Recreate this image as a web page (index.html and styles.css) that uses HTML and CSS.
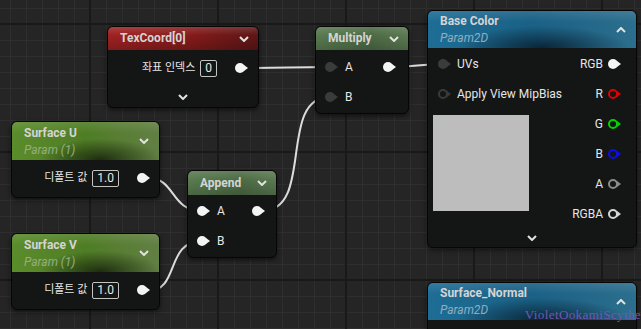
FILE: index.html
```html
<!DOCTYPE html>
<html lang="ko">
    <head>
        <meta charset="UTF-8">
        <title>Material Graph</title>
        <link rel="stylesheet" href="styles.css">
    </head>
    <body>

        <div class="graph">

            <!-- wires sit under the nodes -->
            <svg class="wires" width="641" height="329" viewBox="0 0 641 329">
                <path d="M247 68 C 285 68, 292 67, 330 67"/>
                <path d="M394 67 C 415 67, 420 64, 443 64"/>
                <path d="M148 178 C 176 178, 170 211, 202 211"/>
                <path d="M148 291 C 180 291, 165 241, 202 241"/>
                <path d="M262 211 C 315 211, 277 97, 330 97"/>
            </svg>

            <!-- TexCoord -->
            <div class="node texcoord">
                <div class="head red">
                    <span class="title">TexCoord[0]</span>
                    <svg class="chev" width="10" height="6" viewBox="0 0 10 6"><path d="M1 1 L5 5 L9 1"/></svg>
                </div>
                <div class="body pad-top3">
                    <div class="row out wide">
                        <span class="label ko">좌표 인덱스</span>
                        <span class="val">0</span>
                        <span class="pin"></span>
                    </div>
                    <div class="foot tall">
                        <svg class="chev" width="10" height="6" viewBox="0 0 10 6"><path d="M1 1 L5 5 L9 1"/></svg>
                    </div>
                </div>
            </div>

            <!-- Multiply -->
            <div class="node multiply">
                <div class="head sage">
                    <span class="title">Multiply</span>
                    <svg class="chev" width="10" height="6" viewBox="0 0 10 6"><path d="M1 1 L5 5 L9 1"/></svg>
                </div>
                <div class="body pad-top2">
                    <div class="row both">
                        <span class="pin dim"></span>
                        <span class="label">A</span>
                        <span class="pin push"></span>
                    </div>
                    <div class="row in">
                        <span class="pin dim"></span>
                        <span class="label">B</span>
                    </div>
                </div>
            </div>

            <!-- Append -->
            <div class="node append">
                <div class="head sage">
                    <span class="title">Append</span>
                    <svg class="chev" width="10" height="6" viewBox="0 0 10 6"><path d="M1 1 L5 5 L9 1"/></svg>
                </div>
                <div class="body pad-top1">
                    <div class="row both">
                        <span class="pin"></span>
                        <span class="label">A</span>
                        <span class="pin push"></span>
                    </div>
                    <div class="row in">
                        <span class="pin"></span>
                        <span class="label">B</span>
                    </div>
                </div>
            </div>

            <!-- Surface U -->
            <div class="node surf-u">
                <div class="head grass double">
                    <div class="titles">
                        <span class="title">Surface U</span>
                        <span class="sub">Param (1)</span>
                    </div>
                    <svg class="chev" width="10" height="6" viewBox="0 0 10 6"><path d="M1 1 L5 5 L9 1"/></svg>
                </div>
                <div class="body pad-top3">
                    <div class="row out wide">
                        <span class="label ko">디폴트 값</span>
                        <span class="val">1.0</span>
                        <span class="pin"></span>
                    </div>
                </div>
            </div>

            <!-- Surface V -->
            <div class="node surf-v">
                <div class="head grass double">
                    <div class="titles">
                        <span class="title">Surface V</span>
                        <span class="sub">Param (1)</span>
                    </div>
                    <svg class="chev" width="10" height="6" viewBox="0 0 10 6"><path d="M1 1 L5 5 L9 1"/></svg>
                </div>
                <div class="body pad-top3">
                    <div class="row out wide">
                        <span class="label ko">디폴트 값</span>
                        <span class="val">1.0</span>
                        <span class="pin"></span>
                    </div>
                </div>
            </div>

            <!-- Base Color -->
            <div class="node base-color">
                <div class="head sea double">
                    <div class="titles">
                        <span class="title">Base Color</span>
                        <span class="sub">Param2D</span>
                    </div>
                    <svg class="chev" width="10" height="6" viewBox="0 0 10 6"><path d="M1 5 L5 1 L9 5"/></svg>
                </div>
                <div class="body pad-top1 split">
                    <div class="col-left">
                        <div class="row in">
                            <span class="pin dim"></span>
                            <span class="label">UVs</span>
                        </div>
                        <div class="row in">
                            <span class="pin ring dark"></span>
                            <span class="label">Apply View MipBias</span>
                        </div>
                        <div class="preview"></div>
                    </div>
                    <div class="col-right">
                        <div class="row out"><span class="label">RGB</span><span class="pin"></span></div>
                        <div class="row out"><span class="label">R</span><span class="pin ring red-pin"></span></div>
                        <div class="row out"><span class="label">G</span><span class="pin ring green-pin"></span></div>
                        <div class="row out"><span class="label">B</span><span class="pin ring blue-pin"></span></div>
                        <div class="row out"><span class="label">A</span><span class="pin ring gray-pin"></span></div>
                        <div class="row out"><span class="label">RGBA</span><span class="pin ring light-pin"></span></div>
                    </div>
                </div>
                <div class="foot">
                    <svg class="chev" width="10" height="6" viewBox="0 0 10 6"><path d="M1 1 L5 5 L9 1"/></svg>
                </div>
            </div>

            <!-- Surface_Normal -->
            <div class="node surf-normal">
                <div class="head sea double">
                    <div class="titles">
                        <span class="title">Surface_Normal</span>
                        <span class="sub">Param2D</span>
                    </div>
                    <svg class="chev" width="10" height="6" viewBox="0 0 10 6"><path d="M1 5 L5 1 L9 5"/></svg>
                </div>
            </div>

            <div class="mark">VioletOokamiScythe</div>

        </div>

    </body>
</html>
```

FILE: styles.css
```css
*
{
    box-sizing: border-box;
}

body
{
    margin: 0;
    background-color: #252525;
    font-family: Roboto, "Noto Sans CJK KR", sans-serif;
}

.graph
{
    position: relative;
    width: 641px;
    height: 329px;
    overflow: hidden;
    background-color: #252525;
    background-image:
        linear-gradient(to right, #191919 2px, transparent 2px),
        linear-gradient(to bottom, #191919 2px, transparent 2px),
        linear-gradient(to right, #2e2e2e 1px, transparent 1px),
        linear-gradient(to bottom, #2e2e2e 1px, transparent 1px);
    background-size: 128px 128px, 128px 128px, 16px 16px, 16px 16px;
    background-position: 89px 0, 0 23px, 10px 0, 0 8px;
}

.wires
{
    position: absolute;
    left: 0;
    top: 0;
}
.wires path
{
    fill: none;
    stroke: #dcdcdc;
    stroke-width: 2;
}

/* nodes */

.node
{
    position: absolute;
    background-color: #141515;
    border: 1px solid #060606;
    border-radius: 6px;
    box-shadow: 0 2px 5px rgba(0, 0, 0, 0.55);
    overflow: hidden;
    color: #e6e6e6;
    font-size: 12px;
}

.texcoord    { left: 107px; top: 26px;  width: 152px; height: 82px; }
.multiply    { left: 315px; top: 26px;  width: 94px;  height: 88px; }
.append      { left: 187px; top: 170px; width: 90px;  height: 88px; }
.surf-u      { left: 11px;  top: 121px; width: 149px; height: 77px; }
.surf-v      { left: 11px;  top: 233px; width: 149px; height: 77px; }
.base-color  { left: 427px; top: 10px;  width: 210px; height: 238px; }
.surf-normal { left: 427px; top: 282px; width: 210px; height: 80px; }

.head
{
    height: 23px;
    display: flex;
    align-items: center;
    justify-content: space-between;
    padding: 0 9px 0 12px;
    color: #d4d4d4;
    font-weight: bold;
}
.append .head
{
    height: 24px;
}
.head.double
{
    height: 38px;
    align-items: center;
    padding-right: 10px;
}
.sea.double
{
    height: 37px;
}

.titles
{
    display: flex;
    flex-direction: column;
    margin-top: 1px;
}
.title
{
    line-height: 17px;
}
.sub
{
    line-height: 17px;
    font-weight: normal;
    font-style: italic;
}
.grass .sub
{
    color: #97ad7f;
}
.sea .sub
{
    color: #8bb0c2;
}

.chev path
{
    fill: none;
    stroke: #e2e2e2;
    stroke-width: 2;
}

.red
{
    background:
        linear-gradient(to bottom, rgba(255, 255, 255, 0.14), rgba(0, 0, 0, 0) 35%, rgba(0, 0, 0, 0.2)),
        linear-gradient(to right, #a02222, #861b1b 55%, #5e1616);
}
.sage
{
    background:
        linear-gradient(to bottom, rgba(255, 255, 255, 0.12), rgba(0, 0, 0, 0) 35%, rgba(0, 0, 0, 0.18)),
        linear-gradient(to right, #5a7c50, #4d6b45 60%, #5b7a52);
}
.grass
{
    background:
        radial-gradient(ellipse 55% 75% at 60% 100%, rgba(12, 18, 6, 0.75), rgba(0, 0, 0, 0) 75%),
        linear-gradient(to bottom, rgba(255, 255, 255, 0.1), rgba(0, 0, 0, 0) 30%),
        linear-gradient(to right, #5b8c2b, #4f7d25 50%, #627f44);
}
.sea
{
    background:
        radial-gradient(ellipse 55% 80% at 55% 100%, rgba(2, 12, 22, 0.7), rgba(0, 0, 0, 0) 75%),
        linear-gradient(to bottom, rgba(255, 255, 255, 0.1), rgba(0, 0, 0, 0) 30%),
        linear-gradient(to right, #1e6d95, #1a6186 50%, #2c6e8d);
}

/* body rows */

.pad-top1 { padding-top: 1px; }
.pad-top2 { padding-top: 2px; }
.pad-top3 { padding-top: 3px; }

.row
{
    height: 30px;
    display: flex;
    align-items: center;
    white-space: nowrap;
}
.row.in
{
    padding-left: 9px;
    gap: 6px;
}
.row.both
{
    padding: 0 11px 0 9px;
    gap: 6px;
}
.append .row.both
{
    padding-right: 10px;
}
.row.out
{
    justify-content: flex-end;
    padding-right: 14px;
    gap: 5px;
}
.row.out.wide
{
    padding-right: 9px;
}
.surf-u .row.out.wide,
.surf-v .row.out.wide
{
    padding-right: 8px;
}
.row.out.wide .pin
{
    margin-left: 13px;
}
.base-color .row.in
{
    padding-left: 10px;
    gap: 5px;
}

.label
{
    line-height: 14px;
}
.label.ko
{
    font-size: 11px;
}

.val
{
    height: 17px;
    line-height: 15px;
    padding: 0 4px;
    border: 1px solid #c4c4c4;
    border-radius: 2px;
    font-size: 12px;
    color: #e8e8e8;
}

/* pins */

.pin
{
    position: relative;
    flex: none;
    width: 10px;
    height: 10px;
    margin-right: 4px;
    border-radius: 50%;
    color: #f4f4f4;
    background-color: currentColor;
}
.pin::after
{
    content: "";
    position: absolute;
    left: 9px;
    top: 2px;
    border-left: 4px solid currentColor;
    border-top: 3px solid transparent;
    border-bottom: 3px solid transparent;
}
.pin.push
{
    margin-left: auto;
}
.pin.dim
{
    color: #3b3b3b;
}
.pin.ring
{
    background-color: transparent;
    border: 2px solid currentColor;
}
.pin.ring::after
{
    left: 7px;
    top: 0;
}
.pin.dark       { color: #3a3a3a; }
.pin.red-pin    { color: #e00000; }
.pin.green-pin  { color: #00d400; }
.pin.blue-pin   { color: #0c0cf0; }
.pin.gray-pin   { color: #8a8a8a; }
.pin.light-pin  { color: #d6d6d6; }

.foot
{
    height: 18px;
    display: flex;
    align-items: center;
    justify-content: center;
}
.foot.tall
{
    height: 24px;
    padding-top: 4px;
}

.split
{
    display: flex;
    justify-content: space-between;
}
.preview
{
    width: 96px;
    height: 96px;
    margin: 6px 0 0 5px;
    background-color: #bdbdbd;
}

.mark
{
    position: absolute;
    right: 0;
    top: 307px;
    font-family: "Liberation Serif", serif;
    font-size: 13px;
    letter-spacing: 0.4px;
    color: #7656b2;
    white-space: nowrap;
}
```
